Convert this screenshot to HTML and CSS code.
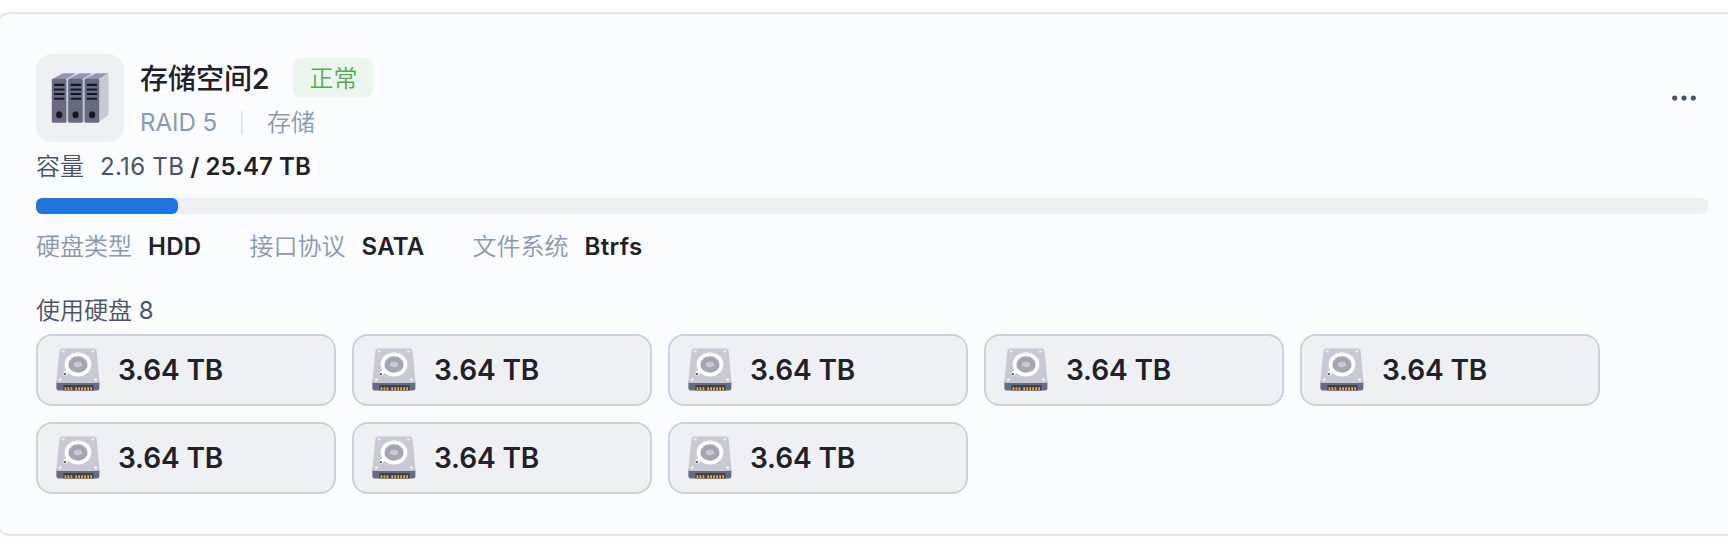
FILE: index.html
```
<!DOCTYPE html>
<html lang="zh-CN">
<head>
    <meta charset="UTF-8">
    <title>存储空间2</title>
    <link rel="stylesheet" href="styles.css">
</head>
<body>
    <!-- Shared hard disk icon -->
    <svg class="sprite" aria-hidden="true">
        <symbol id="disk" viewBox="0 0 44 44">
            <path d="M.4 33.500h43v6.800a2.200 2.200 0 0 1-2.200 2.200H2.600A2.200 2.200 0 0 1 .4 40.300z" fill="#676b81"/>
            <path d="M5.500.4h33a2 2 0 0 1 2 1.800l2.900 31.200q.2 1.700-1.500 1.700H1.900Q.2 35.100.4 33.400L3.500 2.200a2 2 0 0 1 2-1.800z" fill="#c8c9d3"/>
            <path d="M7.400 37h30.200v5.500H7.400z" fill="#3d4154"/>
            <path d="M8.600 39.300h1.700v3H8.600zm3 0h1.700v3h-1.700zm3 0h1.700v3h-1.700zm4.700 0H21v3h-1.700zm3 0H24v3h-1.700zm3 0H27v3h-1.700zm3 0H30v3h-1.700zm3 0H33v3h-1.700zm3 0H36v3h-1.700z" fill="#eeb02d"/>
            <path d="M12 22.500l-2.500 3" stroke="#fff" stroke-width="4" stroke-linecap="round"/>
            <ellipse cx="22" cy="16.500" rx="13.400" ry="12" fill="#fff"/>
            <ellipse cx="22" cy="16.500" rx="9.600" ry="8.300" fill="#a3a5b1"/>
            <ellipse cx="22" cy="16.500" rx="4.200" ry="2.800" fill="#c8c9d3"/>
            <circle cx="9" cy="26" r="1.100" fill="#3d4154"/>
            <g fill="#eff0f4">
                <circle cx="7.200" cy="3.300" r="1.400"/>
                <circle cx="36.700" cy="3.300" r="1.400"/>
                <circle cx="4.300" cy="31.500" r="1.500"/>
                <circle cx="39.500" cy="31.500" r="1.500"/>
            </g>
        </symbol>
    </svg>

    <div class="card">
        <div class="header">
            <div class="volume-icon">
                <svg width="60" height="54" viewBox="-.5 -.8 60 54">
                    <path d="M48 8l10-6v41L48 51z" fill="#c8c9d3"/>
                    <path d="M16 8l9-6v41l-9 8zM32 8l9-6v41l-9 8z" fill="#c8c9d3"/>
                    <path d="M1.500 7.500L11 2.300Q12 1.500 14 1.500h11L16 7.500zM17.800 7.500l9.500-5.200q1-.8 3-.8h11l-9 6zM34.300 7.500l9.500-5.200q1-.8 3-.8H58l-10 6z" fill="#9496a9"/>
                    <g fill="#676b81">
                        <rect x="1.300" y="7" width="14.600" height="44" rx="1.500"/>
                        <rect x="17.700" y="7" width="14.600" height="44" rx="1.500"/>
                        <rect x="34.100" y="7" width="14.600" height="44" rx="1.500"/>
                    </g>
                    <g fill="#171824">
                        <path d="M3.500 12h10.400v2.100H3.500zm0 4.600h10.400v2.100H3.500zm0 4.600h10.400v2.100H3.500zm0 4.700h10.400V28H3.500z"/>
                        <path d="M20 12h10.600v2.100H20zm0 4.600h10.600v2.100H20zm0 4.600h10.600v2.100H20zm0 4.700h10.600V28H20z"/>
                        <path d="M36.300 12h10.400v2.100H36.300zm0 4.600h10.400v2.100H36.300zm0 4.600h10.400v2.100H36.300zm0 4.700h10.400V28H36.300z"/>
                        <ellipse cx="8.700" cy="43" rx="3.100" ry="3.500"/>
                        <ellipse cx="25.100" cy="43" rx="3.100" ry="3.500"/>
                        <ellipse cx="41.600" cy="43" rx="3.100" ry="3.500"/>
                    </g>
                </svg>
            </div>
            <div class="summary">
                <div class="title-row">
                    <h2>存储空间<span>2</span></h2>
                    <span class="status">正常</span>
                </div>
                <div class="subtitle">
                    <span>RAID 5</span>
                    <span class="divider"></span>
                    <span class="label">存储</span>
                </div>
            </div>
            <button class="more" type="button" aria-label="更多">
                <svg width="24" height="6" viewBox="0 0 24 6" fill="#475467">
                    <circle cx="2.700" cy="3" r="2.600"/>
                    <circle cx="12" cy="3" r="2.600"/>
                    <circle cx="21.300" cy="3" r="2.600"/>
                </svg>
            </button>
        </div>

        <div class="capacity">
            <span class="label">容量</span>
            <span class="used">2.16 TB</span>
            <span class="total">/ 25.47 TB</span>
        </div>
        <div class="progress">
            <div class="progress-bar" style="width: 8.5%"></div>
        </div>

        <div class="details">
            <div class="detail"><span class="label">硬盘类型</span><strong>HDD</strong></div>
            <div class="detail"><span class="label">接口协议</span><strong>SATA</strong></div>
            <div class="detail"><span class="label">文件系统</span><strong>Btrfs</strong></div>
        </div>

        <div class="disk-title"><span class="label">使用硬盘</span> 8</div>
        <div class="disks">
            <div class="disk"><svg><use href="#disk"/></svg><span>3.64 TB</span></div>
            <div class="disk"><svg><use href="#disk"/></svg><span>3.64 TB</span></div>
            <div class="disk"><svg><use href="#disk"/></svg><span>3.64 TB</span></div>
            <div class="disk"><svg><use href="#disk"/></svg><span>3.64 TB</span></div>
            <div class="disk"><svg><use href="#disk"/></svg><span>3.64 TB</span></div>
            <div class="disk"><svg><use href="#disk"/></svg><span>3.64 TB</span></div>
            <div class="disk"><svg><use href="#disk"/></svg><span>3.64 TB</span></div>
            <div class="disk"><svg><use href="#disk"/></svg><span>3.64 TB</span></div>
        </div>
    </div>
</body>
</html>
```
FILE: styles.css
```
* {
    box-sizing: border-box;
}

body {
    margin: 0;
    background: #fff;
    overflow: hidden;
    font-family: Inter, "Noto Sans CJK SC", sans-serif;
    font-size: 24px;
    line-height: 36px;
    color: #475467;
}

.sprite {
    display: none;
}

.card {
    width: 1752px;
    height: 524px;
    margin: 12px 0 0 -4px;
    padding: 40px 38px 38px;
    background: #fbfcfe;
    border: 2px solid #e0e6ee;
    border-radius: 14px;
}

.header {
    display: flex;
    height: 88px;
}

.volume-icon {
    display: flex;
    align-items: center;
    justify-content: center;
    width: 88px;
    height: 88px;
    margin-right: 16px;
    background: #eff0f4;
    border-radius: 16px;
}

.summary {
    flex: 1;
    padding-top: 4px;
}

.title-row {
    display: flex;
    align-items: center;
    gap: 24px;
    height: 40px;
}

h2 {
    margin: 0;
    padding-top: 2px;
    font-size: 28px;
    font-weight: 500;
    line-height: 40px;
    color: #1f2128;
}

h2 span {
    font-weight: 600;
}

.label, .status {
    font-weight: 350;
}

.status {
    height: 40px;
    padding: 0 16px;
    line-height: 42px;
    color: #58ab56;
    background: #ecf6ee;
    border-radius: 8px;
}

.subtitle {
    display: flex;
    align-items: center;
    margin-top: 7px;
    color: #8799b4;
}

.divider {
    width: 2px;
    height: 24px;
    margin: 0 24px;
    background: #e0e6ee;
}

.more {
    align-self: center;
    display: flex;
    margin-right: 12px;
    padding: 0;
    background: none;
    border: none;
    cursor: pointer;
}

.capacity {
    display: flex;
    margin-top: 7px;
}

.used {
    margin-left: 16px;
    letter-spacing: 0.3px;
}

.total {
    margin-left: 6px;
    font-weight: 600;
    letter-spacing: 0.1px;
    color: #1f2128;
}

.progress {
    height: 16px;
    margin-top: 13px;
    background: #eff0f4;
    border-radius: 6px;
}

.progress-bar {
    height: 16px;
    background: #2173df;
    border-radius: 6px;
}

.details {
    display: flex;
    gap: 48px;
    margin-top: 15px;
}

.detail {
    display: flex;
    gap: 16px;
    color: #8799b4;
}

.detail strong {
    font-weight: 600;
    letter-spacing: 0.3px;
    color: #1f2128;
}

.disk-title {
    margin-top: 28px;
}

.disks {
    display: flex;
    flex-wrap: wrap;
    gap: 16px;
    margin-top: 5px;
}

.disk {
    display: flex;
    align-items: center;
    gap: 18px;
    width: 300px;
    height: 72px;
    padding: 0 18px;
    font-size: 28px;
    font-weight: 600;
    letter-spacing: -0.1px;
    color: #1f2128;
    background: #eff0f4;
    border: 2px solid #c8d3df;
    border-radius: 16px;
}

.disk svg {
    width: 44px;
    height: 44px;
}
```
